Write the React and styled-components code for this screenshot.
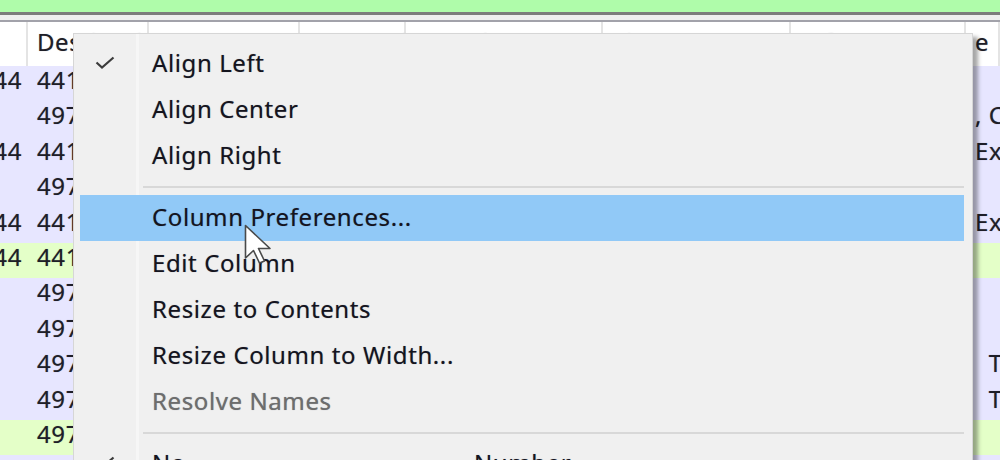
import React from 'react'
import styled, { createGlobalStyle } from 'styled-components'

const GlobalStyle = createGlobalStyle`
  html, body {
    margin: 0;
    padding: 0;
    background: #ffffff;
  }
  body {
    font-family: 'Noto Sans', 'DejaVu Sans', sans-serif;
  }
`

// column widths of the packet list, left to right
const columns = [28, 121, 151, 106, 197, 188, 175, 34]

const headers = ['', 'Destination', 'Source', 'Protocol', 'Length', 'Time', 'Info', 'e']

const rows = [
  { kind: 'tcp', no: '1044', id: '4417', tail: '' },
  { kind: 'tcp', no: '', id: '4973', tail: ', C' },
  { kind: 'tcp', no: '1044', id: '4417', tail: 'Ex' },
  { kind: 'tcp', no: '', id: '4973', tail: '' },
  { kind: 'tcp', no: '1044', id: '4417', tail: 'Ex' },
  { kind: 'http', no: '1044', id: '4417', tail: '' },
  { kind: 'tcp', no: '', id: '4973', tail: '' },
  { kind: 'tcp', no: '', id: '4973', tail: '' },
  { kind: 'tcp', no: '', id: '4973', tail: '  T' },
  { kind: 'tcp', no: '', id: '4973', tail: '  T' },
  { kind: 'http', no: '', id: '4973', tail: '' },
  { kind: 'tcp', no: '', id: '4973', tail: '' },
]

const menuItems = [
  { label: 'Align Left', checked: true },
  { label: 'Align Center' },
  { label: 'Align Right' },
  { separator: true },
  { label: 'Column Preferences...', active: true },
  { label: 'Edit Column' },
  { label: 'Resize to Contents' },
  { label: 'Resize Column to Width...' },
  { label: 'Resolve Names', disabled: true },
  { separator: true },
  { label: 'No.', extra: 'Number', checked: true },
]

const Page = styled.div`
  position: relative;
  width: 1000px;
  height: 460px;
  overflow: hidden;
  background: #ffffff;
  font-size: 24px;
  letter-spacing: 0.6px;
  color: #1e1e28;
  text-shadow: 0 0 0.8px rgba(20, 20, 40, 0.45);
`

const FilterBar = styled.div`
  height: 12px;
  background: #affcaa;
  border-bottom: 3px solid #7c7c7c;
`

const Splitter = styled.div`
  height: 5px;
  background: #efefef;
  border-bottom: 2px solid #a2a2aa;
`

const TableGrid = styled.div`
  display: grid;
  grid-template-columns: ${columns.map((w) => `${w}px`).join(' ')};
`

const HeaderCell = styled.div`
  height: 44px;
  box-sizing: border-box;
  padding: 6px 0 0 9px;
  line-height: 28px;
  background: #ffffff;
  border-right: 2px solid #e4e4e4;
  white-space: pre;
  overflow: hidden;
`

const Cell = styled.div`
  height: 35.4px;
  box-sizing: border-box;
  padding: 0 ${(p) => (p.$right ? '6px' : '0')} 0 ${(p) => (p.$right ? '0' : '9px')};
  line-height: 28px;
  background: ${(p) => (p.$kind === 'http' ? '#e4ffc8' : '#e7e6ff')};
  text-align: ${(p) => (p.$right ? 'right' : 'left')};
  direction: ${(p) => (p.$right ? 'rtl' : 'ltr')};
  white-space: pre;
  overflow: hidden;
`

const Menu = styled.div`
  position: absolute;
  left: 73px;
  top: 33px;
  width: 900px;
  height: 460px;
  box-sizing: border-box;
  padding: 7px 8px 0 6px;
  background: #f0f0f0;
  border: 1px solid #d6d6d6;
  box-shadow: 5px 4px 4px rgba(0, 0, 0, 0.35);

  &::before {
    content: '';
    position: absolute;
    left: 62px;
    top: 0;
    bottom: 0;
    width: 3px;
    background: #f6f6f6;
  }
`

const MenuItem = styled.div`
  position: relative;
  display: grid;
  grid-template-columns: 72px 322px 1fr;
  align-items: center;
  height: 46px;
  box-sizing: border-box;
  padding-bottom: 4px;
  background: ${(p) => (p.$active ? '#91c9f7' : 'transparent')};
  color: ${(p) => (p.$disabled ? '#6d6d6d' : '#14141e')};
  white-space: nowrap;
`

const CheckSlot = styled.div`
  display: flex;
  align-items: center;
  padding: 2px 0 0 15px;
  height: 100%;
`

const Separator = styled.div`
  height: 2px;
  margin: 7px 0 7px 63px;
  background: #d8d8d8;
`

const Cursor = styled.svg`
  position: absolute;
  left: 244px;
  top: 224px;
  width: 32px;
  height: 42px;
`

const Check = () => (
  <svg width="20" height="14" viewBox="0 0 20 14">
    <path d="M1.5 6.5 L7 11.5 L18.5 1.5" fill="none" stroke="#3c3c3c" strokeWidth="2.2" />
  </svg>
)

const App = () => {
  return (
    <>
      <GlobalStyle />
      <Page>
        <FilterBar />
        <Splitter />
        <TableGrid>
          {headers.map((h, i) => (
            <HeaderCell key={i}>{h}</HeaderCell>
          ))}
          {rows.map((row, r) => (
            <React.Fragment key={r}>
              <Cell $kind={row.kind} $right>{row.no}</Cell>
              <Cell $kind={row.kind}>{row.id}</Cell>
              {columns.slice(2, -1).map((_, c) => (
                <Cell key={c} $kind={row.kind} />
              ))}
              <Cell $kind={row.kind}>{row.tail}</Cell>
            </React.Fragment>
          ))}
        </TableGrid>

        <Menu>
          {menuItems.map((item, i) =>
            item.separator ? (
              <Separator key={i} />
            ) : (
              <MenuItem key={i} $active={item.active} $disabled={item.disabled}>
                <CheckSlot>{item.checked && <Check />}</CheckSlot>
                <span>{item.label}</span>
                <span>{item.extra}</span>
              </MenuItem>
            )
          )}
        </Menu>

        <Cursor viewBox="0 0 32 42">
          <path
            d="M1.5 1.5 L1.5 34 L9.5 26.5 L15.5 39 L20.5 37 L14.5 24.5 L26 24.5 Z"
            fill="#ffffff"
            stroke="#4a4a4a"
            strokeWidth="1.6"
            strokeLinejoin="round"
          />
        </Cursor>
      </Page>
    </>
  )
}

export default App
